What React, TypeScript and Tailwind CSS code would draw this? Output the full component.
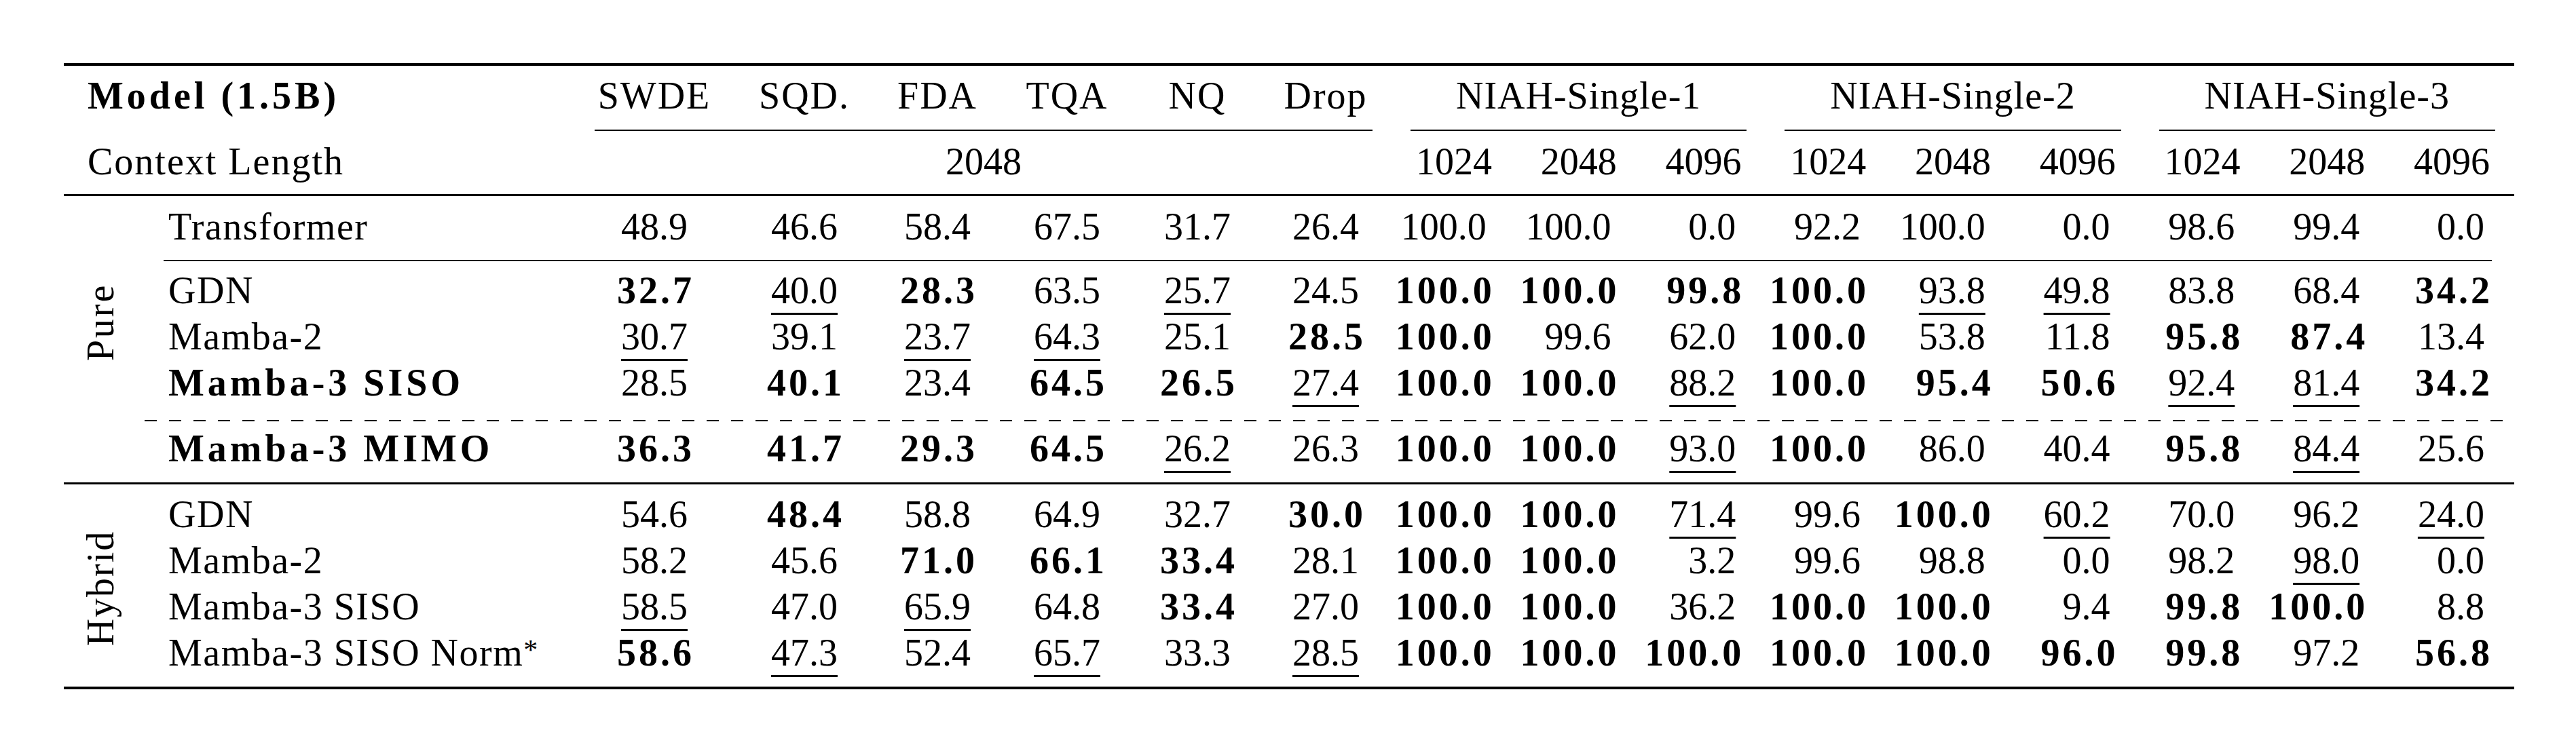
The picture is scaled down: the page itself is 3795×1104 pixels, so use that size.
import React from 'react';

const COLS =
  'grid grid-cols-[119px_635px_232px_210px_182px_200px_184px_194px_repeat(9,183.78px)]';
const INNER =
  'grid grid-cols-[635px_232px_210px_182px_200px_184px_194px_repeat(9,183.78px)]';

type Row = { label: string; bold?: boolean; sup?: boolean; vals: string[] };

const transformer: Row = {
  label: 'Transformer',
  vals: ['48.9', '46.6', '58.4', '67.5', '31.7', '26.4', '100.0', '100.0', '0.0', '92.2', '100.0', '0.0', '98.6', '99.4', '0.0'],
};

const pure: Row[] = [
  {
    label: 'GDN',
    vals: ['*32.7', '_40.0', '*28.3', '63.5', '_25.7', '24.5', '*100.0', '*100.0', '*99.8', '*100.0', '_93.8', '_49.8', '83.8', '68.4', '*34.2'],
  },
  {
    label: 'Mamba-2',
    vals: ['_30.7', '39.1', '_23.7', '_64.3', '25.1', '*28.5', '*100.0', '99.6', '62.0', '*100.0', '53.8', '11.8', '*95.8', '*87.4', '13.4'],
  },
  {
    label: 'Mamba-3 SISO',
    bold: true,
    vals: ['28.5', '*40.1', '23.4', '*64.5', '*26.5', '_27.4', '*100.0', '*100.0', '_88.2', '*100.0', '*95.4', '*50.6', '_92.4', '_81.4', '*34.2'],
  },
];

const mimo: Row = {
  label: 'Mamba-3 MIMO',
  bold: true,
  vals: ['*36.3', '*41.7', '*29.3', '*64.5', '_26.2', '26.3', '*100.0', '*100.0', '_93.0', '*100.0', '86.0', '40.4', '*95.8', '_84.4', '25.6'],
};

const hybrid: Row[] = [
  {
    label: 'GDN',
    vals: ['54.6', '*48.4', '58.8', '64.9', '32.7', '*30.0', '*100.0', '*100.0', '_71.4', '99.6', '*100.0', '_60.2', '70.0', '96.2', '_24.0'],
  },
  {
    label: 'Mamba-2',
    vals: ['58.2', '45.6', '*71.0', '*66.1', '*33.4', '28.1', '*100.0', '*100.0', '3.2', '99.6', '98.8', '0.0', '98.2', '_98.0', '0.0'],
  },
  {
    label: 'Mamba-3 SISO',
    vals: ['_58.5', '47.0', '_65.9', '64.8', '*33.4', '27.0', '*100.0', '*100.0', '36.2', '*100.0', '*100.0', '9.4', '*99.8', '*100.0', '8.8'],
  },
  {
    label: 'Mamba-3 SISO Norm',
    sup: true,
    vals: ['*58.6', '_47.3', '52.4', '_65.7', '33.3', '_28.5', '*100.0', '*100.0', '*100.0', '*100.0', '*100.0', '*96.0', '*99.8', '97.2', '*56.8'],
  },
];

function Num({ v, niah }: { v: string; niah: boolean }) {
  const bold = v.startsWith('*');
  const under = v.startsWith('_');
  const t = bold || under ? v.slice(1) : v;
  const inner = (
    <span className={under ? 'underline decoration-[2.5px] underline-offset-[14px]' : ''}>{t}</span>
  );
  if (niah) {
    return (
      <div
        className={
          bold
            ? 'text-right pr-[32px] font-bold tracking-[4px] whitespace-nowrap'
            : 'text-right pr-[44px] whitespace-nowrap'
        }
      >
        {inner}
      </div>
    );
  }
  return (
    <div
      className={
        bold
          ? 'text-center pl-[4px] font-bold tracking-[4px] whitespace-nowrap'
          : 'text-center whitespace-nowrap'
      }
    >
      {inner}
    </div>
  );
}

function DataRow({ r }: { r: Row }) {
  return (
    <div className={`${INNER} h-[68px]`}>
      <div
        className={
          r.bold
            ? 'pl-[35px] whitespace-nowrap font-bold tracking-[5px]'
            : 'pl-[35px] whitespace-nowrap tracking-[1.5px]'
        }
      >
        {r.label}
        {r.sup ? <span className="relative -top-[9px] text-[42px]">*</span> : null}
      </div>
      {r.vals.map((v, i) => (
        <Num key={i} v={v} niah={i >= 6} />
      ))}
    </div>
  );
}

export default function App() {
  const top = ['SWDE', 'SQD.', 'FDA', 'TQA', 'NQ', 'Drop'];
  const groups = ['NIAH-Single-1', 'NIAH-Single-2', 'NIAH-Single-3'];
  const lens = ['1024', '2048', '4096', '1024', '2048', '4096', '1024', '2048', '4096'];
  return (
    <div className="w-[3795px] h-[1104px] overflow-hidden bg-white text-black font-['Liberation_Serif','Times_New_Roman',serif] text-[56px] leading-[68px] pt-[93px] pl-[94px]">
      <div className="w-[3610px] flex flex-col">
        {/* top rule */}
        <div className="h-[4px] bg-black" />

        {/* header row 1 */}
        <div className={`${COLS} h-[94px] pt-[10px]`}>
          <div className="col-span-2 pl-[35px] font-bold tracking-[5px] whitespace-nowrap">Model (1.5B)</div>
          {top.map((h) => (
            <div key={h} className="text-center tracking-[2px] whitespace-nowrap">
              {h}
            </div>
          ))}
          {groups.map((g) => (
            <div key={g} className="col-span-3 text-center tracking-[1px] whitespace-nowrap">
              {g}
            </div>
          ))}
        </div>

        {/* cmidrules */}
        <div className={`${COLS} h-[2px]`}>
          <div className="col-start-3 col-span-6 mx-[28px] bg-black" />
          <div className="col-span-3 mx-[28px] bg-black" />
          <div className="col-span-3 mx-[28px] bg-black" />
          <div className="col-span-3 mx-[28px] bg-black" />
        </div>

        {/* header row 2 */}
        <div className={`${COLS} h-[93px] pt-[11px]`}>
          <div className="col-span-2 pl-[35px] tracking-[2px] whitespace-nowrap">Context Length</div>
          <div className="col-span-6 text-center">2048</div>
          {lens.map((l, i) => (
            <div key={i} className="text-center">
              {l}
            </div>
          ))}
        </div>

        {/* midrule */}
        <div className="h-[3px] bg-black" />

        {/* Pure section */}
        <div className="flex">
          <div className="w-[119px] flex items-center justify-center pb-[50px] pr-[11px]">
            <span className="block -rotate-90 whitespace-nowrap tracking-[3px]">Pure</span>
          </div>
          <div className="w-[3491px] flex flex-col">
            <div className="h-[94px] pt-[11px]">
              <DataRow r={transformer} />
            </div>
            <div className="h-[2px] ml-[28px] mr-[33px] bg-black" />
            <div className="pt-[9px] flex flex-col">
              {pure.map((r) => (
                <DataRow key={r.label} r={r} />
              ))}
            </div>
            <div className="mt-[21px] h-[2px] bg-[image:repeating-linear-gradient(90deg,#000_0px,#000_18px,transparent_18px,transparent_36px)]" />
            <div className="mt-[6px] mb-[16px]">
              <DataRow r={mimo} />
            </div>
          </div>
        </div>

        {/* midrule */}
        <div className="h-[3px] bg-black" />

        {/* Hybrid section */}
        <div className="flex">
          <div className="w-[119px] flex items-center justify-center pt-[8px] pr-[11px]">
            <span className="block -rotate-90 whitespace-nowrap tracking-[2px]">Hybrid</span>
          </div>
          <div className="w-[3491px] flex flex-col pt-[10px] pb-[16px]">
            {hybrid.map((r) => (
              <DataRow key={r.label} r={r} />
            ))}
          </div>
        </div>

        {/* bottom rule */}
        <div className="h-[4px] bg-black" />
      </div>
    </div>
  );
}
